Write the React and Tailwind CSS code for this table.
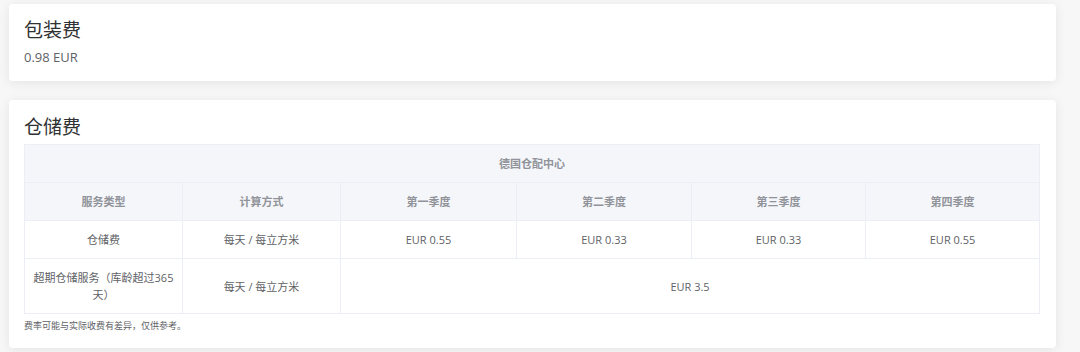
import React from 'react';

const quarters = ['第一季度', '第二季度', '第三季度', '第四季度'];

const Card = ({ title, children, className = '' }) => (
  <div className={`ml-[9px] w-[1047px] bg-white rounded-[4px] shadow-[0_2px_12px_rgba(0,0,0,0.08)] px-[15px] ${className}`}>
    <h2 className="text-[19px] leading-[28px] text-[#303133] font-normal">{title}</h2>
    {children}
  </div>
);

const App = () => {
  const th = 'border border-[#ebeef5] px-[6px] py-[10px] leading-[17px] text-[11px] font-bold text-[#909399] text-center';
  const td = 'border border-[#ebeef5] px-[6px] py-[10px] leading-[17px] text-[11px] text-[#606266] text-center';

  return (
    <div
      className="w-[1080px] h-[352px] bg-[#f7f7f8] pt-[4px] overflow-hidden"
      style={{ fontFamily: '"Open Sans", "Noto Sans CJK SC", sans-serif' }}
    >
      <Card title="包装费" className="pt-[12px] pb-[15px]">
        <div className="mt-[4px] text-[13px] leading-[18px] text-[#606266]">0.98 EUR</div>
      </Card>

      <Card title="仓储费" className="mt-[19px] pt-[13px] pb-[15px]">
        <table className="mt-[3px] w-[1015px] table-fixed border-collapse">
          <colgroup>
            <col className="w-[158px]" />
            <col className="w-[158px]" />
            <col className="w-[176px]" />
            <col className="w-[175px]" />
            <col className="w-[174px]" />
            <col className="w-[174px]" />
          </colgroup>
          <thead className="bg-[#f5f6fa]">
            <tr>
              <th colSpan={6} className={th}>德国仓配中心</th>
            </tr>
            <tr>
              <th className={th}>服务类型</th>
              <th className={th}>计算方式</th>
              {quarters.map((q) => (
                <th key={q} className={th}>{q}</th>
              ))}
            </tr>
          </thead>
          <tbody>
            <tr>
              <td className={td}>仓储费</td>
              <td className={td}>每天 / 每立方米</td>
              <td className={td}>EUR 0.55</td>
              <td className={td}>EUR 0.33</td>
              <td className={td}>EUR 0.33</td>
              <td className={td}>EUR 0.55</td>
            </tr>
            <tr>
              <td className={td}>超期仓储服务（库龄超过365天）</td>
              <td className={td}>每天 / 每立方米</td>
              <td colSpan={4} className={td}>EUR 3.5</td>
            </tr>
          </tbody>
        </table>
        <p className="mt-[5px] text-[9px] leading-[14px] text-[#606266]">费率可能与实际收费有差异，仅供参考。</p>
      </Card>
    </div>
  );
};

export default App;
